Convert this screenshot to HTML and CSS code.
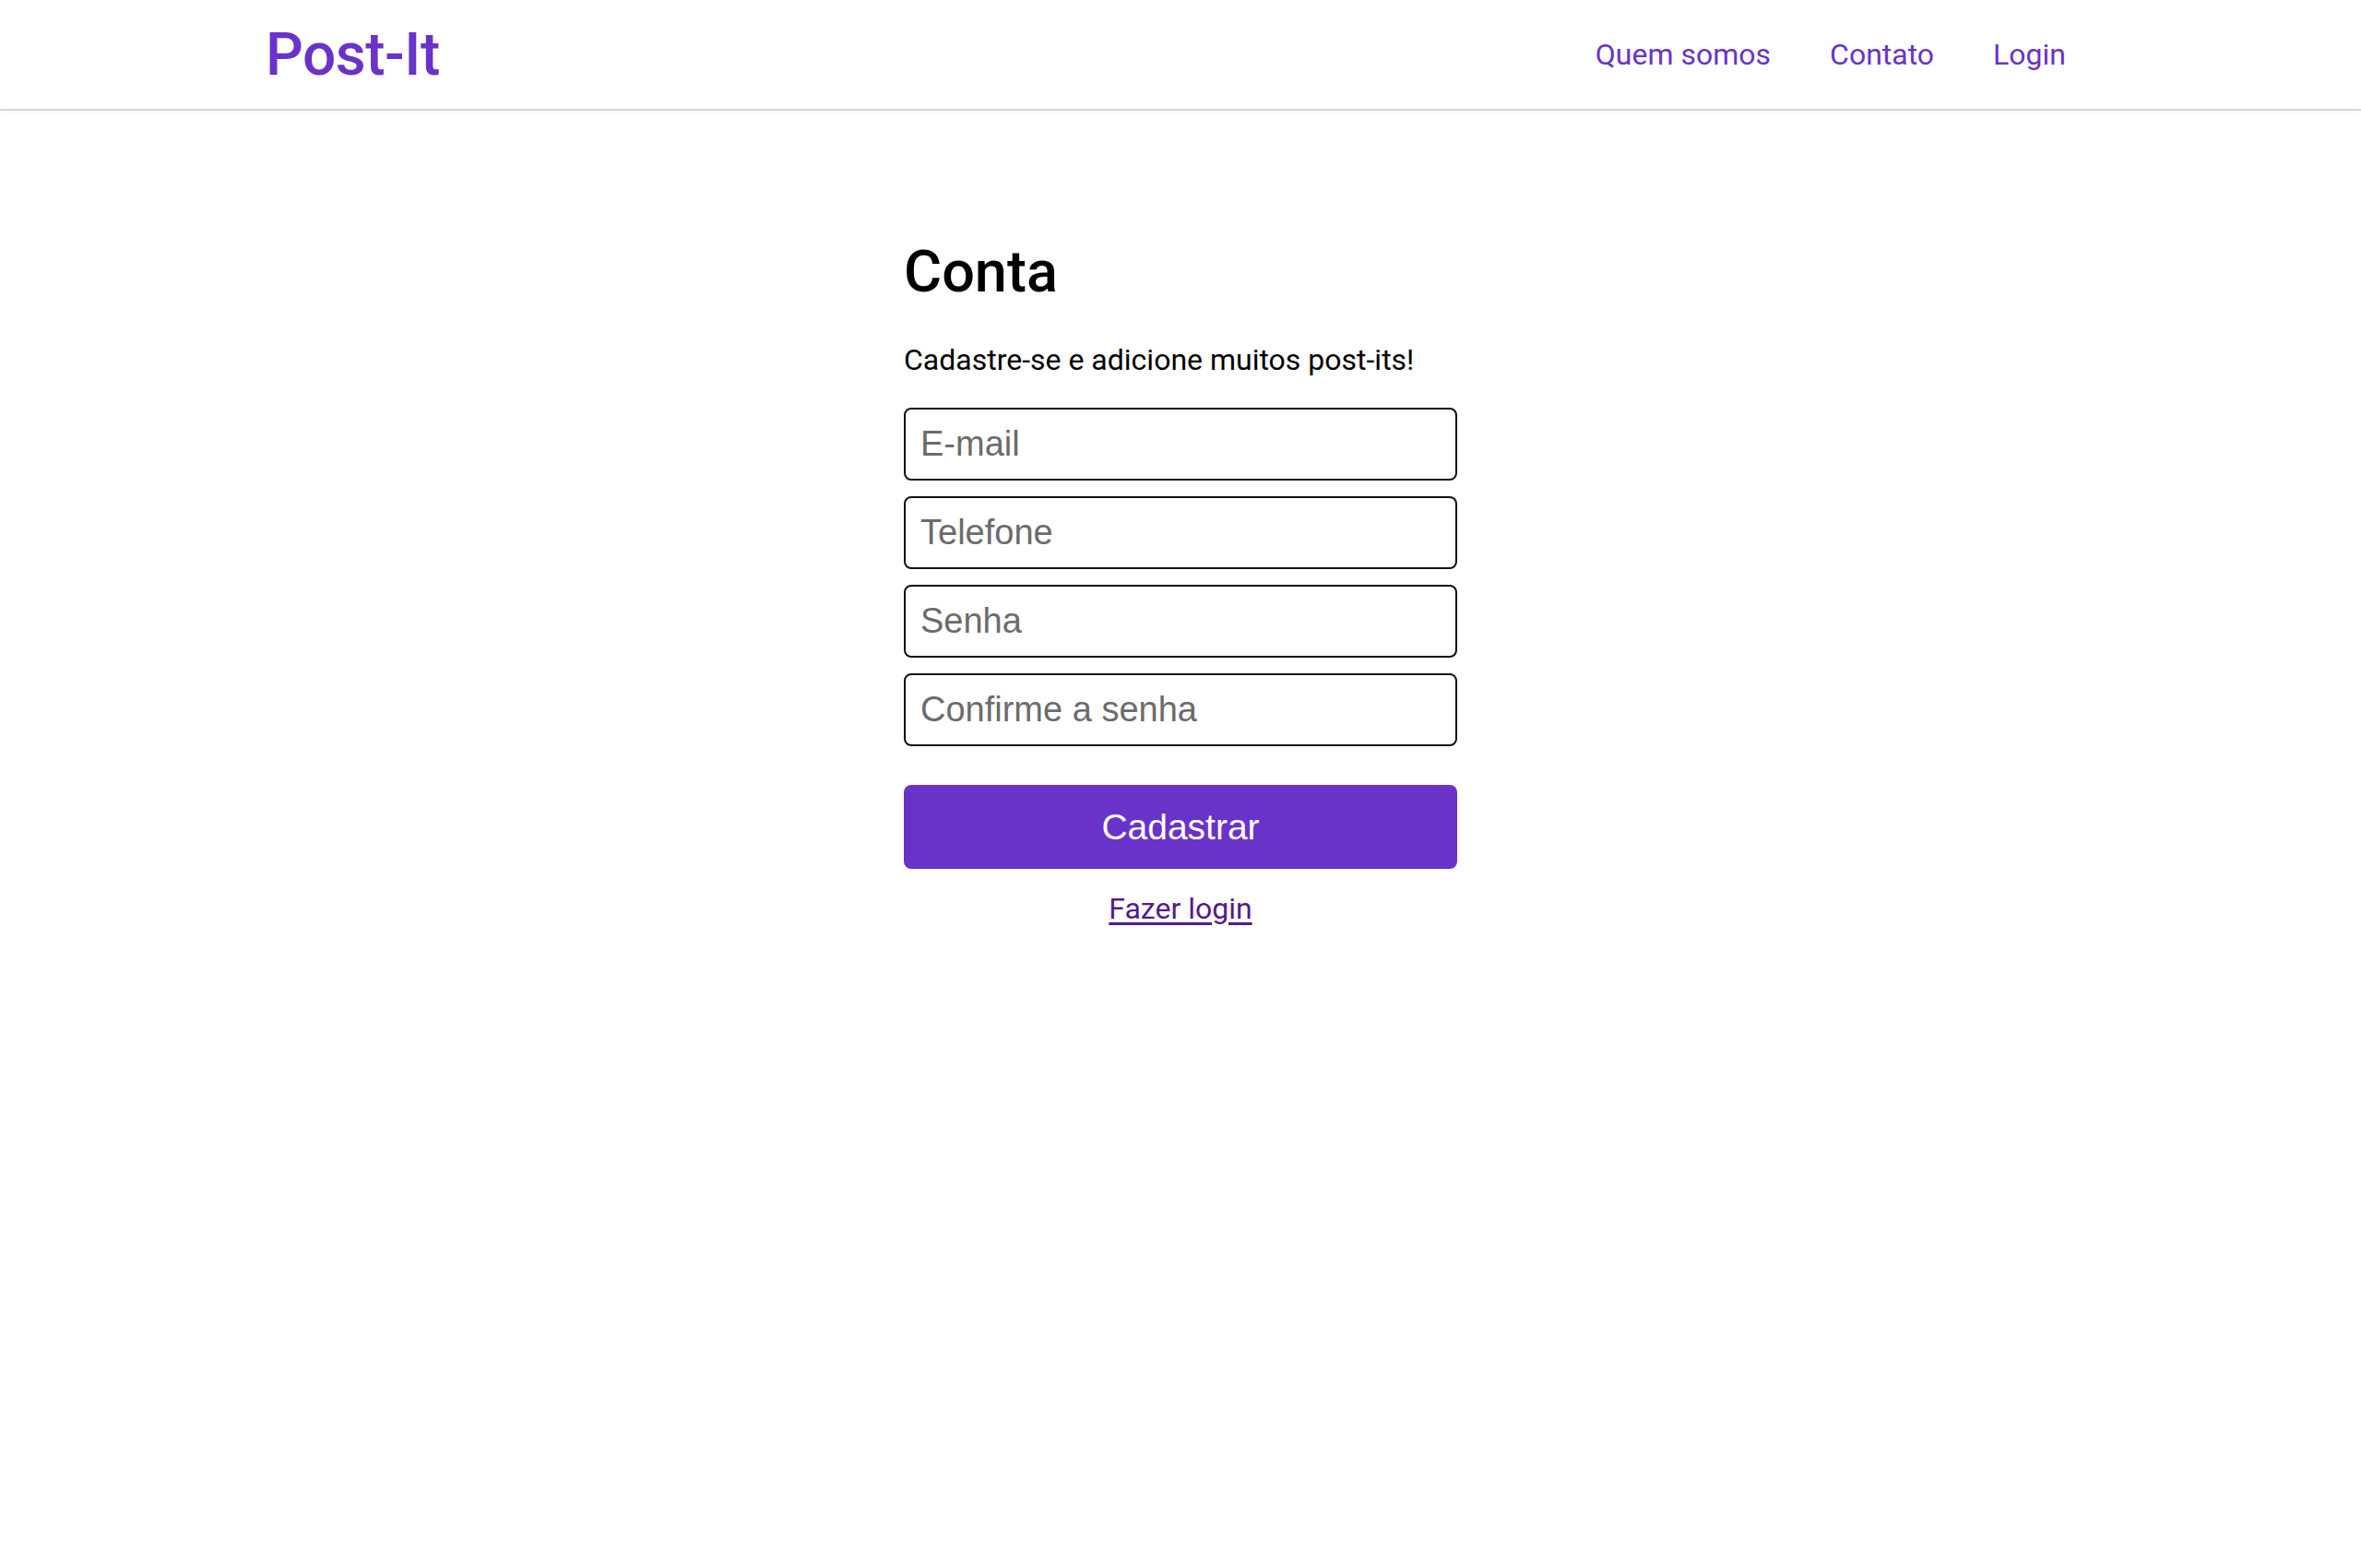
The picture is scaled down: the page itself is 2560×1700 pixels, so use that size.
FILE: index.html
```html
<!DOCTYPE html>
<html lang="pt-BR">
<head>
<meta charset="utf-8">
<title>Post-It</title>
<link rel="stylesheet" href="styles.css">
</head>
<body>
<header class="topbar">
  <a class="logo" href="#">Post-It</a>
  <nav class="nav">
    <a href="#">Quem somos</a>
    <a href="#">Contato</a>
    <a href="#">Login</a>
  </nav>
</header>
<main class="main">
  <form class="card">
    <h1 class="title">Conta</h1>
    <p class="subtitle">Cadastre-se e adicione muitos post-its!</p>
    <div class="fields">
      <input class="field" type="email" placeholder="E-mail">
      <input class="field" type="tel" placeholder="Telefone">
      <input class="field" type="password" placeholder="Senha">
      <input class="field" type="password" placeholder="Confirme a senha">
    </div>
    <button class="submit" type="button">Cadastrar</button>
    <a class="alt-link" href="#">Fazer login</a>
  </form>
</main>
</body>
</html>
```

FILE: styles.css
```css
* { box-sizing: border-box; }
html, body { margin: 0; padding: 0; background: #fff; }
body { font-family: Roboto, "Liberation Sans", sans-serif; color: #000; }

.topbar {
  height: 120px;
  display: flex;
  align-items: center;
  justify-content: space-between;
  padding: 0 288px;
  border-bottom: 2px solid #d3d6dc;
  box-shadow: 0 2px 4px rgba(0,0,0,0.04);
}
.logo {
  font-size: 64px;
  font-weight: 500;
  color: #6933c9;
  text-decoration: none;
  letter-spacing: -0.5px;
}
.nav { display: flex; }
.nav a {
  font-size: 32px;
  color: #6933c9;
  text-decoration: none;
  padding: 0 32px;
}

.main { display: flex; justify-content: center; padding-top: 137px; }
.card { width: 600px; display: flex; flex-direction: column; }
.title {
  margin: 0;
  font-size: 63px;
  font-weight: 500;
  line-height: 76px;
}
.subtitle {
  margin: 38px 0 0;
  font-size: 32px;
  line-height: 38px;
}
.fields { display: flex; flex-direction: column; gap: 17px; margin-top: 33px; }
.field {
  height: 79px;
  width: 100%;
  border: 2px solid #111;
  border-radius: 8px;
  padding: 0 16px;
  font-family: "Liberation Sans", Arial, sans-serif;
  font-size: 38px;
  color: #000;
  background: #fff;
  outline: none;
}
.field::placeholder { color: #6b6b6b; }
.submit {
  margin-top: 42px;
  height: 91px;
  border: none;
  border-radius: 8px;
  background: #6933c9;
  color: #fff;
  font-family: "Liberation Sans", Arial, sans-serif;
  font-size: 39px;
}
.alt-link {
  margin-top: 24px;
  align-self: center;
  font-size: 32px;
  color: #551a8b;
  text-decoration: underline;
  text-underline-offset: 4px;
}
```
